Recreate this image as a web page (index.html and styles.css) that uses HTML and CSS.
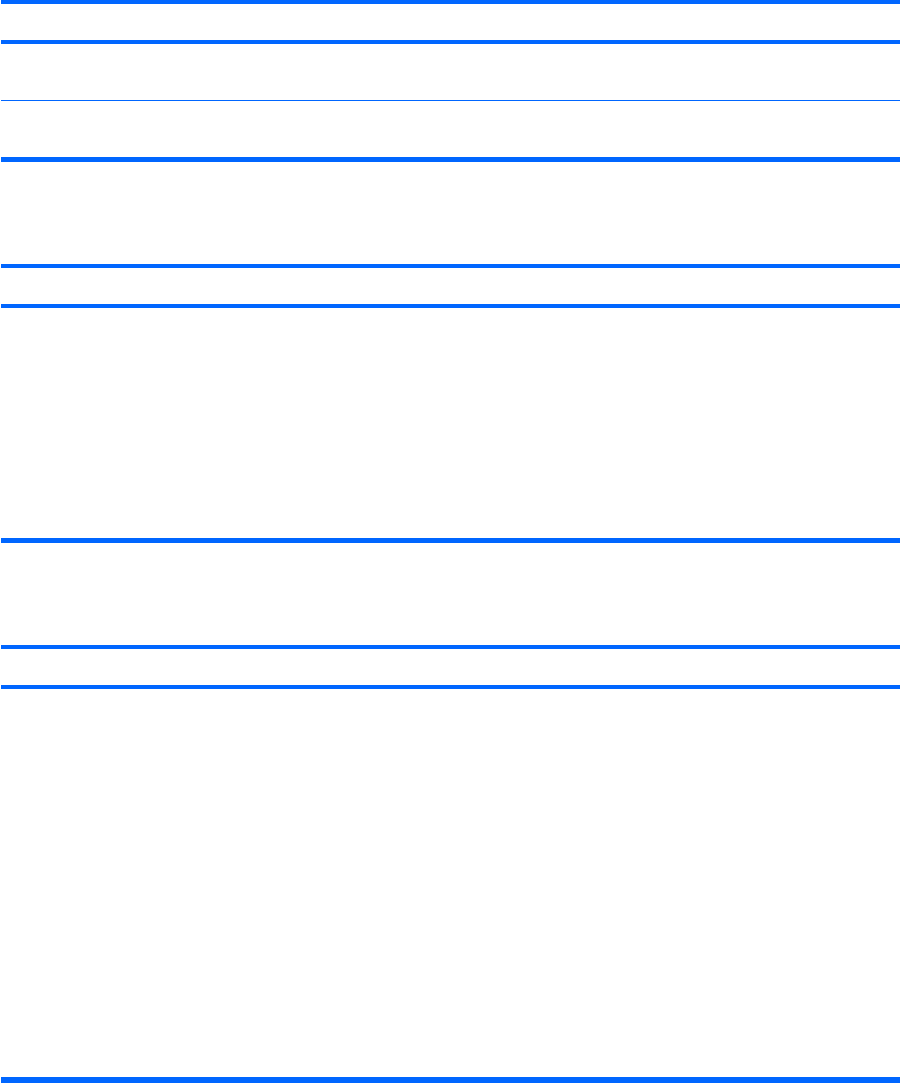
FILE: index.html
```html
<!DOCTYPE html>
<html lang="en">
<head>
  <meta charset="UTF-8">
  <title>Tables</title>
  <link rel="stylesheet" href="styles.css">
</head>
<body>

  <section class="spec-table">
    <div class="head-row"></div>
    <div class="row"></div>
    <div class="row"></div>
  </section>

  <section class="spec-table">
    <div class="head-row"></div>
    <div class="row row-tall"></div>
  </section>

  <section class="spec-table spec-table-last">
    <div class="head-row"></div>
    <div class="row row-xl"></div>
  </section>

</body>
</html>
```

FILE: styles.css
```css
* {
  box-sizing: border-box;
  margin: 0;
  padding: 0;
}

body {
  font-family: 'Liberation Sans', Arial, sans-serif;
  background-color: #fff;
  padding: 0 1px;
}

.spec-table {
  border-top: 4px solid #0066ff;
  border-bottom: 5px solid #0066ff;
}

.spec-table + .spec-table {
  margin-top: 102px;
}

.spec-table-last {
  border-bottom-width: 6px;
}

.head-row {
  height: 40px;
  border-bottom: 4px solid #0066ff;
}

.row {
  height: 56px;
}

.row + .row {
  height: 57px;
  border-top: 1px solid #0066ff;
}

.row-tall {
  height: 230px;
}

.row-xl {
  height: 388px;
}
```
